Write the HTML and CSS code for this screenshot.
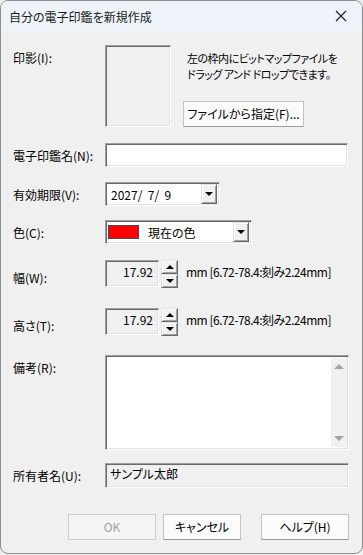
FILE: index.html
```html
<!DOCTYPE html>
<html lang="ja">
<head>
    <meta charset="UTF-8">
    <title>自分の電子印鑑を新規作成</title>
    <link rel="stylesheet" href="styles.css">
</head>
<body>
    <div class="window">
        <div class="titlebar">
            <span class="title">自分の電子印鑑を新規作成</span>
            <svg class="close" width="12" height="12" viewBox="0 0 12 12">
                <path d="M1 1 L11 11 M11 1 L1 11" stroke="#1b1b1b" stroke-width="1.1" fill="none"/>
            </svg>
        </div>

        <div class="content">
            <!-- 印影 -->
            <div class="row row-stamp">
                <label class="label label-top">印影(I):</label>
                <div class="stamp-area">
                    <div class="stamp-box sunken"></div>
                    <div class="stamp-side">
                        <p class="stamp-note">左の枠内にビットマップファイルを</p>
                        <p class="stamp-note">ドラッグ アンド ドロップできます。</p>
                        <button class="btn btn-file">ファイルから指定(F)...</button>
                    </div>
                </div>
            </div>

            <div class="row row-name">
                <label class="label">電子印鑑名(N):</label>
                <div class="field field-name sunken"></div>
            </div>

            <div class="row row-date">
                <label class="label">有効期限(V):</label>
                <div class="field field-date sunken">
                    <span class="date-text">2027/&nbsp;&nbsp;7/&nbsp;&nbsp;9</span>
                    <span class="drop-btn raised"><i class="tri-down"></i></span>
                </div>
            </div>

            <div class="row row-color">
                <label class="label">色(C):</label>
                <div class="field field-color sunken">
                    <span class="swatch"></span>
                    <span class="color-text">現在の色</span>
                    <span class="drop-btn raised"><i class="tri-down"></i></span>
                </div>
            </div>

            <div class="row row-spin">
                <label class="label label-low">幅(W):</label>
                <div class="spin-group">
                    <div class="spin-box sunken">17.92</div>
                    <div class="spinner">
                        <span class="spin-btn raised"><i class="tri-up"></i></span>
                        <span class="spin-btn raised"><i class="tri-down"></i></span>
                    </div>
                    <span class="unit">mm [6.72-78.4:刻み2.24mm]</span>
                </div>
            </div>

            <div class="row row-spin row-spin2">
                <label class="label label-low">高さ(T):</label>
                <div class="spin-group">
                    <div class="spin-box sunken">17.92</div>
                    <div class="spinner">
                        <span class="spin-btn raised"><i class="tri-up"></i></span>
                        <span class="spin-btn raised"><i class="tri-down"></i></span>
                    </div>
                    <span class="unit">mm [6.72-78.4:刻み2.24mm]</span>
                </div>
            </div>

            <div class="row row-memo">
                <label class="label label-top">備考(R):</label>
                <div class="field field-memo sunken">
                    <div class="scrollbar">
                        <i class="tri-up gray"></i>
                        <i class="tri-down gray"></i>
                    </div>
                </div>
            </div>

            <div class="row row-owner">
                <label class="label">所有者名(U):</label>
                <div class="field field-owner sunken">サンプル太郎</div>
            </div>

            <div class="actions">
                <button class="btn btn-ok" disabled>OK</button>
                <button class="btn btn-cancel">キャンセル</button>
                <button class="btn btn-help">ヘルプ(H)</button>
            </div>
        </div>
    </div>
</body>
</html>
```

FILE: styles.css
```css
* {
    margin: 0;
    padding: 0;
    box-sizing: border-box;
    font-family: 'Noto Sans CJK JP', 'Noto Sans', sans-serif;
    font-feature-settings: "palt";
}

html, body {
    width: 363px;
    height: 555px;
    overflow: hidden;
    background: #f0f0f0;
}

.window {
    width: 363px;
    height: 554px;
    border: 1px solid #8e8e8e;
    border-radius: 8px;
    overflow: hidden;
    background: #f0f0f0;
    color: #000;
    font-size: 12px;
}

.titlebar {
    height: 30px;
    background: #eef3f9;
    display: flex;
    align-items: center;
    justify-content: space-between;
    padding: 0 15px 0 8px;
}

.title {
    font-size: 12px;
    color: #1b1b1b;
    padding-top: 1px;
}

.content {
    padding: 0 13px 0 12px;
}

/* 共通の行 */
.row {
    display: grid;
    grid-template-columns: 92px 1fr;
    align-items: center;
}

.label {
    font-size: 12px;
    line-height: 15px;
    white-space: nowrap;
}

.label-top {
    align-self: start;
    padding-top: 5px;
}

.label-low {
    padding-top: 7px;
}

/* 3D の枠 */
.sunken {
    border: 1px solid;
    border-color: #a0a0a0 #ffffff #ffffff #a0a0a0;
    box-shadow: inset 1px 1px 0 #696969, inset -1px -1px 0 #e3e3e3;
}

.raised {
    display: block;
    background: #f0f0f0;
    border: 1px solid;
    border-color: #e3e3e3 #696969 #696969 #e3e3e3;
    box-shadow: inset 1px 1px 0 #ffffff, inset -1px -1px 0 #a0a0a0;
}

.tri-down, .tri-up {
    display: block;
    width: 0;
    height: 0;
    border-left: 4px solid transparent;
    border-right: 4px solid transparent;
}

.tri-down {
    border-top: 4px solid #000;
}

.tri-up {
    border-bottom: 4px solid #000;
}

/* 印影 */
.row-stamp {
    margin-top: 14px;
}

.stamp-area {
    display: flex;
}

.stamp-box {
    width: 66px;
    height: 82px;
    background: #f0f0f0;
}

.stamp-side {
    margin-left: 12px;
    padding-top: 5px;
}

.stamp-note {
    font-size: 11px;
    line-height: 16px;
    padding-left: 4px;
    letter-spacing: -0.5px;
    white-space: nowrap;
}

.btn {
    font-size: 12px;
    line-height: 16px;
    color: #000;
    background: #fbfbfb;
    border: 1px solid #c4c4c4;
    border-bottom-color: #9c9c9c;
    height: 26px;
    cursor: default;
}

.btn-file {
    display: block;
    width: 121px;
    margin-top: 19px;
}

/* 入力欄 */
.field {
    background: #fff;
    height: 24px;
}

.row-name {
    margin-top: 16px;
}

.field-name {
    width: 243px;
}

.row-date {
    margin-top: 15px;
}

.field-date {
    width: 115px;
    display: flex;
    align-items: center;
    justify-content: space-between;
    padding: 0 2px 0 5px;
}

.date-text {
    font-size: 12px;
}

.drop-btn {
    width: 16px;
    height: 20px;
    display: flex;
    align-items: center;
    justify-content: center;
}

.row-color {
    margin-top: 14px;
}

.field-color {
    width: 147px;
    display: flex;
    align-items: center;
    padding: 0 2px 0 2px;
}

.swatch {
    width: 31px;
    height: 14px;
    background: #ff0000;
    border: 1px solid #4a4a4a;
}

.color-text {
    flex: 1;
    margin-left: 9px;
    font-size: 12px;
}

/* 幅・高さ */
.row-spin {
    margin-top: 16px;
}

.row-spin2 {
    margin-top: 20px;
}

.spin-group {
    display: flex;
    align-items: flex-start;
}

.spin-box {
    width: 54px;
    height: 27px;
    background: #f0f0f0;
    text-align: right;
    padding: 3px 5px 0 0;
    font-size: 12px;
    line-height: 16px;
}

.spinner {
    margin-left: 2px;
    display: flex;
    flex-direction: column;
}

.spin-btn {
    width: 17px;
    height: 14px;
    display: flex;
    align-items: center;
    justify-content: center;
}

.unit {
    margin-left: 8px;
    padding-top: 4px;
    font-size: 12px;
    line-height: 16px;
    white-space: nowrap;
    letter-spacing: -0.5px;
}

/* 備考 */
.row-memo {
    margin-top: 19px;
}

.field-memo {
    width: 244px;
    height: 95px;
    display: flex;
    justify-content: flex-end;
    padding: 2px 1px 2px 2px;
}

.scrollbar {
    width: 16px;
    background: #f0f0f0;
    display: flex;
    flex-direction: column;
    align-items: center;
    justify-content: space-between;
    padding: 6px 0 6px;
}

.tri-up.gray {
    border-bottom: 5px solid #a3a3a3;
    border-left-width: 5px;
    border-right-width: 5px;
}

.tri-down.gray {
    border-top: 5px solid #a3a3a3;
    border-left-width: 5px;
    border-right-width: 5px;
}

/* 所有者名 */
.row-owner {
    margin-top: 13px;
}

.field-owner {
    width: 244px;
    height: 25px;
    background: #f0f0f0;
    padding: 2px 4px;
    font-size: 12px;
    line-height: 16px;
}

/* ボタン */
.actions {
    display: flex;
    justify-content: flex-end;
    margin-top: 26px;
}

.btn-ok {
    width: 88px;
    color: #a0a0a0;
    border-color: #cccccc;
    background: #f5f5f5;
}

.btn-cancel {
    width: 78px;
    margin-left: 7px;
}

.btn-help {
    width: 88px;
    margin-left: 20px;
}
```
